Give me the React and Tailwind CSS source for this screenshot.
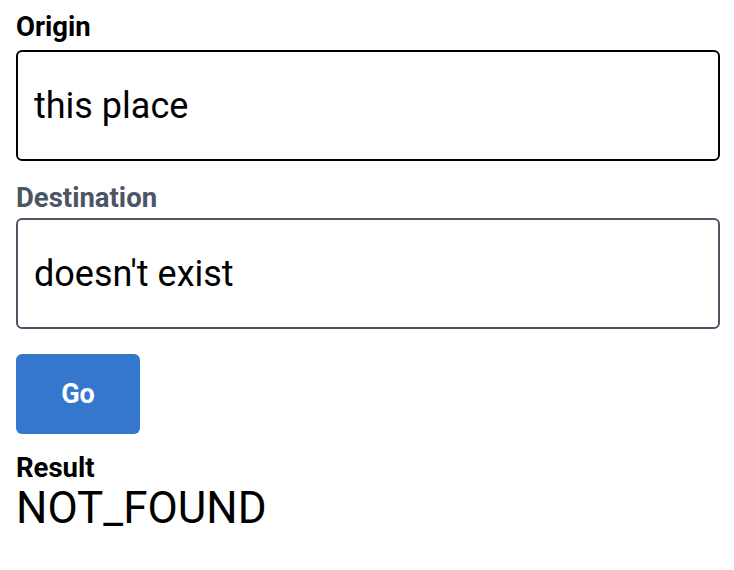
import { useState } from "react";

export default function App() {
  const [origin, setOrigin] = useState("this place");
  const [destination, setDestination] = useState("doesn't exist");
  const [result] = useState("NOT_FOUND");

  return (
    <div className="px-4 pt-[12px] font-['Roboto',sans-serif] text-black bg-white min-h-[570px]">
      {/* origin */}
      <label className="block text-[27.5px] leading-[30px] font-bold">Origin</label>
      <input
        value={origin}
        onChange={(e) => setOrigin(e.target.value)}
        className="mt-[8px] block w-[704px] h-[111px] border-2 border-black rounded-[6px] px-4 text-[36px] outline-none"
      />

      {/* destination */}
      <label className="block mt-[22px] text-[27.5px] leading-[30px] font-bold text-[#4b5563]">Destination</label>
      <input
        value={destination}
        onChange={(e) => setDestination(e.target.value)}
        className="mt-[5px] block w-[704px] h-[111px] border-2 border-[#4b5563] rounded-[6px] px-4 text-[36px] outline-none"
      />

      <button className="mt-[25px] block w-[124px] h-[80px] rounded-[6px] bg-[#3477cc] text-white text-[27px] font-bold">
        Go
      </button>

      {/* result */}
      <div className="mt-[19px] text-[27.5px] leading-[30px] font-bold">Result</div>
      <div className="text-[44px] leading-[50px]">{result}</div>
    </div>
  );
}
